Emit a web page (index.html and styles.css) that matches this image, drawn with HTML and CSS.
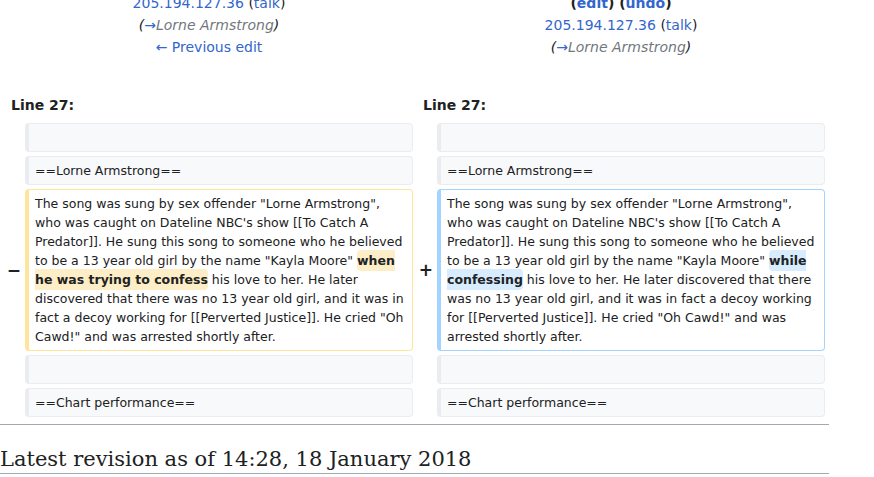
FILE: index.html
```html
<!DOCTYPE html>
<html lang="en">
<head>
<meta charset="utf-8">
<title>Diff</title>
<link rel="stylesheet" href="styles.css">
</head>
<body>
<div class="page">
  <table class="diff">
    <colgroup>
      <col class="col-marker">
      <col class="col-content">
      <col class="col-marker">
      <col class="col-content">
    </colgroup>
    <tr class="diff-title">
      <td colspan="2" class="diff-otitle">
        <div><a class="lnk">205.194.127.36</a> (<a class="lnk">talk</a>)</div>
        <div class="comment">(<a class="lnk">→</a><span class="autocomment">Lorne Armstrong</span>)</div>
        <div><a class="lnk">← Previous edit</a></div>
      </td>
      <td colspan="2" class="diff-ntitle">
        <div class="rev-title">(<a class="lnk">edit</a>) (<a class="lnk">undo</a>)</div>
        <div><a class="lnk">205.194.127.36</a> (<a class="lnk">talk</a>)</div>
        <div class="comment">(<a class="lnk">→</a><span class="autocomment">Lorne Armstrong</span>)</div>
      </td>
    </tr>
    <tr>
      <td colspan="2" class="diff-lineno">Line 27:</td>
      <td colspan="2" class="diff-lineno">Line 27:</td>
    </tr>
    <tr>
      <td class="diff-marker"></td>
      <td class="diff-context"><br></td>
      <td class="diff-marker"></td>
      <td class="diff-context"><br></td>
    </tr>
    <tr>
      <td class="diff-marker"></td>
      <td class="diff-context">==Lorne Armstrong==</td>
      <td class="diff-marker"></td>
      <td class="diff-context">==Lorne Armstrong==</td>
    </tr>
    <tr>
      <td class="diff-marker">−</td>
      <td class="diff-deletedline">The song was sung by sex offender "Lorne Armstrong", who was caught on Dateline NBC's show [[To Catch A Predator]]. He sung this song to someone who he believed to be a 13 year old girl by the name "Kayla Moore" <span class="diffchange">when he was trying to confess</span> his love to her. He later discovered that there was no 13 year old girl, and it was in fact a decoy working for [[Perverted Justice]]. He cried "Oh Cawd!" and was arrested shortly after.</td>
      <td class="diff-marker">+</td>
      <td class="diff-addedline">The song was sung by sex offender "Lorne Armstrong", who was caught on Dateline NBC's show [[To Catch A Predator]]. He sung this song to someone who he believed to be a 13 year old girl by the name "Kayla Moore" <span class="diffchange">while confessing</span> his love to her. He later discovered that there was no 13 year old girl, and it was in fact a decoy working for [[Perverted Justice]]. He cried "Oh Cawd!" and was arrested shortly after.</td>
    </tr>
    <tr>
      <td class="diff-marker"></td>
      <td class="diff-context"><br></td>
      <td class="diff-marker"></td>
      <td class="diff-context"><br></td>
    </tr>
    <tr>
      <td class="diff-marker"></td>
      <td class="diff-context">==Chart performance==</td>
      <td class="diff-marker"></td>
      <td class="diff-context">==Chart performance==</td>
    </tr>
  </table>
  <hr class="diff-hr">
  <h2 class="current-title">Latest revision as of 14:28, 18 January 2018</h2>
</div>
</body>
</html>
```
FILE: styles.css
```css
html, body {
  margin: 0;
  padding: 0;
  background: #ffffff;
}

body {
  font-family: "DejaVu Sans", sans-serif;
  font-size: 14px;
  color: #202122;
}

.page {
  width: 829px;
  margin-top: -12px;
}

.diff {
  width: 828px;
  margin-left: 1px;
  border-spacing: 4px;
  table-layout: fixed;
}

.col-marker {
  width: 16px;
}

.diff-otitle,
.diff-ntitle {
  text-align: center;
  vertical-align: top;
  padding: 0;
  line-height: 22px;
}

.rev-title {
  font-weight: bold;
}

.lnk {
  color: #3366cc;
  text-decoration: none;
}

.comment {
  font-style: italic;
  color: #202122;
}

.comment .lnk {
  font-style: normal;
}

.autocomment {
  color: #72777d;
}

.diff-lineno {
  font-weight: bold;
  padding: 32px 6px 3px;
  line-height: 22px;
}

.diff-marker {
  text-align: right;
  font-weight: bold;
  font-size: 17px;
  padding: 0 0 0 0;
  vertical-align: middle;
}

.diff-context,
.diff-deletedline,
.diff-addedline {
  font-size: 12.5px;
  line-height: 19px;
  padding: 4px 6px;
  border: 1px solid #eaecf0;
  border-left-width: 4px;
  border-radius: 4px;
  vertical-align: top;
  word-wrap: break-word;
}

.diff-context {
  background: #f8f9fa;
}

.diff-deletedline {
  border-color: #ffe49c;
}

.diff-addedline {
  border-color: #a3d3ff;
}

.diffchange {
  font-weight: bold;
  border-radius: 4px;
  padding: 3px 0;
}

.diff-deletedline .diffchange {
  background: #feeec8;
}

.diff-addedline .diffchange {
  background: #d8ecff;
}

.diff-hr {
  height: 1px;
  background: #a2a9b1;
  border: 0;
  margin: 3px 0 0;
}

.current-title {
  font-family: "DejaVu Serif", serif;
  font-weight: normal;
  font-size: 21px;
  line-height: 27px;
  margin: 21px 0 0;
  padding: 0;
  border-bottom: 1px solid #a2a9b1;
}
```
